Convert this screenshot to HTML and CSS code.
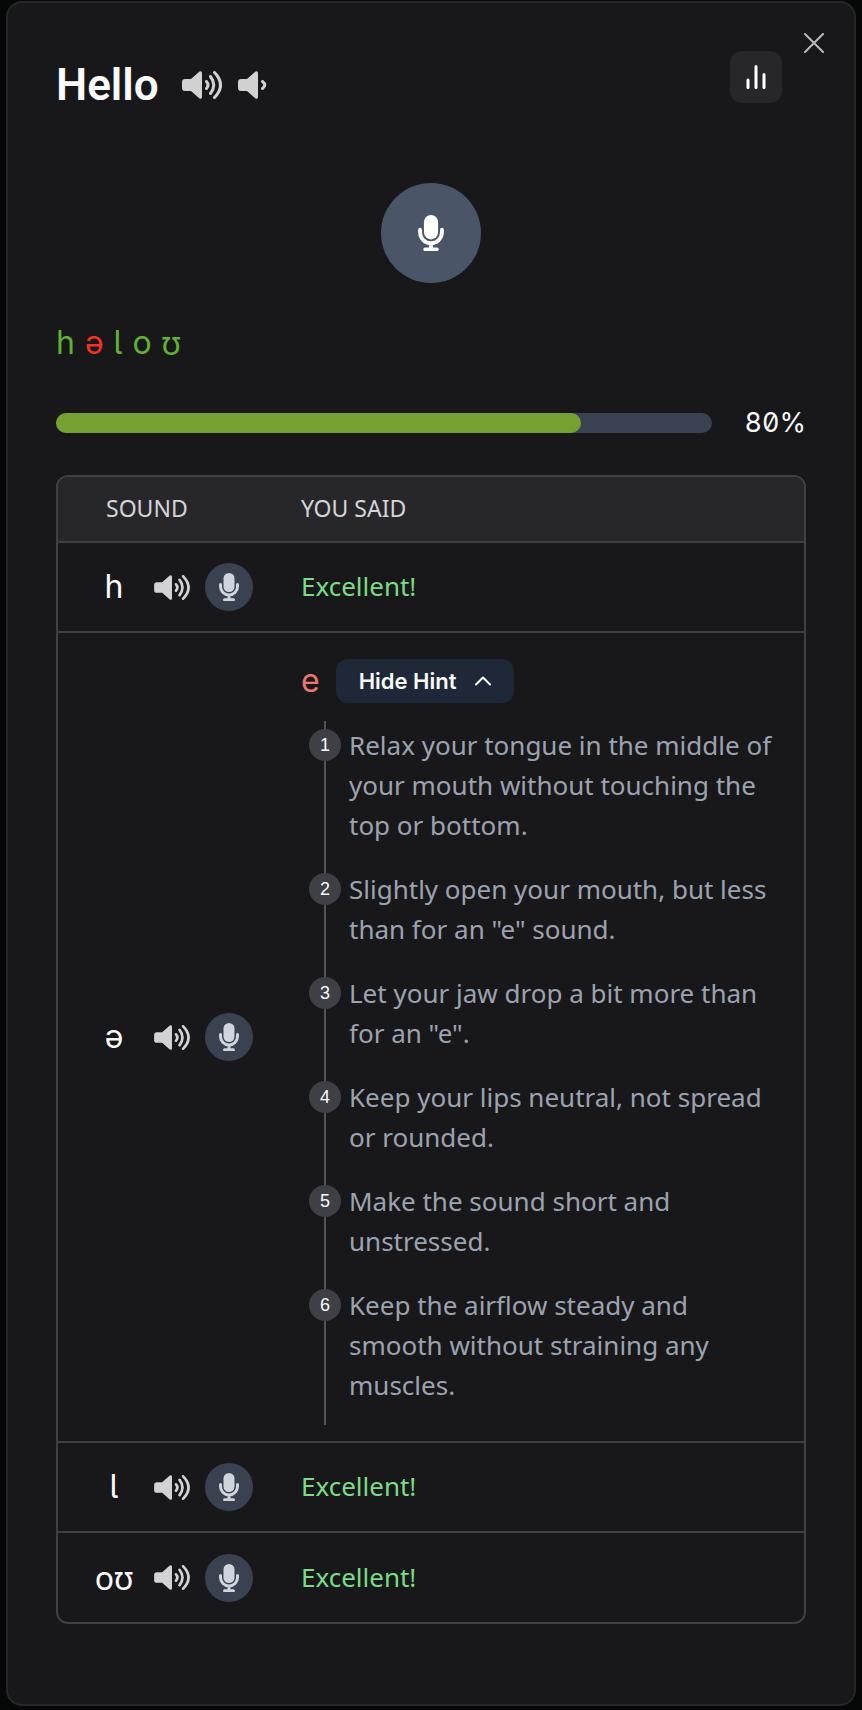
FILE: index.html
```html
<!DOCTYPE html>
<html lang="en">
<head>
<meta charset="utf-8">
<meta name="viewport" content="width=device-width, initial-scale=1">
<title>Hello – pronunciation</title>
<link rel="stylesheet" href="styles.css">
</head>
<body>
<svg class="sprite" aria-hidden="true">
  <symbol id="speaker-loud" viewBox="0 0 40 28">
    <path fill="currentColor" d="M3 8h6L17.500.600Q20 -.5 20 2V26Q20 28.500 17.500 27.400L9 20H3Q0 20 0 17V11Q0 8 3 8Z"/>
    <path class="wave" d="M24.500 10.500Q27.500 14 24.500 17.500M28.500 5.500Q35 14 28.500 22.500M32.500 1.500Q44.500 14 32.500 26.500"/>
  </symbol>
  <symbol id="speaker-quiet" viewBox="0 0 40 28">
    <path fill="currentColor" d="M3 8h6L17.500.600Q20 -.5 20 2V26Q20 28.500 17.500 27.400L9 20H3Q0 20 0 17V11Q0 8 3 8Z"/>
    <path class="wave" d="M24.500 10.500Q29 14 24.500 17.500"/>
  </symbol>
  <symbol id="mic" viewBox="0 0 20 28">
    <rect fill="currentColor" x="4.500" y="0" width="11" height="19" rx="5.500"/>
    <path class="wave" d="M1.500 11.500V13.500a8.500 8.500 0 0 0 17 0V11.500M10 22.500v3.500M5.500 26.700h9"/>
  </symbol>
</svg>
<main class="dialog">
  <button class="close" type="button" aria-label="Close"><svg viewBox="0 0 20 20"><path d="M1 1l18 18M19 1L1 19"/></svg></button>
  <header class="header">
    <h1 class="word">Hello</h1>
    <button class="speaker" type="button" aria-label="Play word"><svg><use href="#speaker-loud"/></svg></button>
    <button class="speaker" type="button" aria-label="Play word slowly"><svg><use href="#speaker-quiet"/></svg></button>
    <button class="stats" type="button" aria-label="Statistics"><svg viewBox="0 0 20 24"><path d="M2 15v7.500M10 1.500v21M18 9.500v13"/></svg></button>
  </header>
  <button class="record" type="button" aria-label="Record word"><svg><use href="#mic"/></svg></button>
  <p class="phonemes"><span>h</span><span class="wrong">ə</span><span>l</span><span>o</span><span class="ipa">ʊ</span></p>
  <div class="score">
    <div class="track" role="progressbar" aria-label="Score" aria-valuenow="80" aria-valuemin="0" aria-valuemax="100"><div class="fill" style="width: 80%"></div></div>
    <span class="percent">80%</span>
  </div>
  <div class="results">
    <table>
      <thead><tr><th class="sound-col" scope="col">SOUND</th><th scope="col">YOU SAID</th></tr></thead>
      <tbody>
        <tr>
          <td><div class="sound"><span class="symbol">h</span><button class="play" type="button" aria-label="Play h"><svg><use href="#speaker-loud"/></svg></button><button class="mic" type="button" aria-label="Record h"><svg><use href="#mic"/></svg></button></div></td>
          <td class="good">Excellent!</td>
        </tr>
        <tr>
          <td><div class="sound"><span class="symbol">ə</span><button class="play" type="button" aria-label="Play ə"><svg><use href="#speaker-loud"/></svg></button><button class="mic" type="button" aria-label="Record ə"><svg><use href="#mic"/></svg></button></div></td>
          <td class="details">
            <div class="said"><span class="heard">e</span><button class="hint" type="button" aria-expanded="true">Hide Hint<svg viewBox="0 0 16 10"><path d="M1 8.500L8 1.500l7 7"/></svg></button></div>
            <ol class="steps">
              <li>Relax your tongue in the middle of your mouth without touching the top or bottom.</li>
              <li>Slightly open your mouth, but less than for an "e" sound.</li>
              <li>Let your jaw drop a bit more than for an "e".</li>
              <li>Keep your lips neutral, not spread or rounded.</li>
              <li>Make the sound short and unstressed.</li>
              <li>Keep the airflow steady and smooth without straining any muscles.</li>
            </ol>
          </td>
        </tr>
        <tr>
          <td><div class="sound"><span class="symbol">l</span><button class="play" type="button" aria-label="Play l"><svg><use href="#speaker-loud"/></svg></button><button class="mic" type="button" aria-label="Record l"><svg><use href="#mic"/></svg></button></div></td>
          <td class="good">Excellent!</td>
        </tr>
        <tr>
          <td><div class="sound"><span class="symbol ipa">oʊ</span><button class="play" type="button" aria-label="Play oʊ"><svg><use href="#speaker-loud"/></svg></button><button class="mic" type="button" aria-label="Record oʊ"><svg><use href="#mic"/></svg></button></div></td>
          <td class="good">Excellent!</td>
        </tr>
      </tbody>
    </table>
  </div>
</main>
</body>
</html>
```
FILE: styles.css
```css
* { box-sizing: border-box; }
body {
  margin: 0;
  padding: 1px 6px 4px;
  min-height: 100vh;
  display: flex;
  background: #060707;
  color: #fafafa;
  font-family: "Noto Sans", "Open Sans", sans-serif;
  font-size: 26px;
  line-height: 40px;
}
button {
  display: flex;
  align-items: center;
  justify-content: center;
  margin: 0;
  padding: 0;
  border: 0;
  background: none;
  color: inherit;
  font: inherit;
  cursor: pointer;
}
svg { display: block; fill: none; stroke-linecap: round; stroke-linejoin: round; }
.sprite { position: absolute; width: 0; height: 0; }
.wave { stroke: currentColor; stroke-width: 3px; }

.dialog {
  position: relative;
  flex: 1;
  padding: 48px;
  border: 2px solid #27272a;
  border-radius: 16px;
  background: #18181b;
}
.close { position: absolute; top: 30px; right: 30px; }
.close svg { width: 20px; height: 20px; stroke: #bababb; stroke-width: 2px; }

.header { display: flex; align-items: center; height: 68px; padding-right: 24px; }
.word {
  margin: 0 23px 0 0;
  font-family: Roboto, sans-serif;
  font-size: 44px;
  font-weight: 600;
  line-height: 48px;
}
.speaker { margin-right: 16px; color: #d1d1d1; }
.speaker svg { width: 40px; height: 28px; }
.stats {
  align-self: flex-start;
  width: 52px;
  height: 52px;
  margin-left: auto;
  border-radius: 12px;
  background: #27272a;
}
.stats svg { width: 20px; height: 24px; stroke: #fff; stroke-width: 3px; }
.record {
  width: 100px;
  height: 100px;
  margin: 64px auto 0;
  border-radius: 50%;
  background: #4a5568;
  color: #fff;
}
.record svg { width: 26px; height: 36px; }

.phonemes, .symbol, .heard {
  font-family: Inter, "Noto Sans", sans-serif;
  font-feature-settings: "cv05";
  font-size: 32px;
}
.phonemes { display: flex; gap: 10px; margin: 40px 0 0; color: #62b132; }
.wrong { color: #ee3524; }
.ipa { font-family: "Noto Sans", sans-serif; }

.score { display: flex; align-items: center; gap: 32px; margin-top: 40px; }
.track { flex: 1; height: 20px; border-radius: 10px; background: #3a4150; }
.fill { height: 100%; border-radius: 10px; background: #74a131; }
.percent { font-family: Inter, sans-serif; font-size: 27px; font-feature-settings: "zero", "tnum"; }

.results { margin-top: 32px; border: 2px solid #3f3f46; border-radius: 12px; overflow: hidden; }
table { width: 100%; border-collapse: collapse; table-layout: fixed; }
th {
  height: 65px;
  padding: 0 24px 2px;
  background: #27272a;
  color: #d4d4d8;
  font-size: 23px;
  font-weight: 400;
  text-align: left;
}
.sound-col { width: 219px; padding-left: 48px; }
td { height: 90px; padding: 0 24px 2px; border-top: 2px solid #3f3f46; }
td:first-child { padding: 0 23px 0 32px; }
.sound { display: flex; align-items: center; }
.symbol { width: 48px; text-align: center; }
.play { margin: 0 15px 0 16px; color: #d1d1d6; }
.play svg { width: 36px; height: 25px; }
.mic { width: 48px; height: 48px; border-radius: 50%; background: #3a4150; color: #d1d5db; }
.mic svg { width: 20px; height: 28px; }
.good { color: #7bdb87; }

.details { padding-top: 26px; padding-bottom: 16px; }
.said { display: flex; align-items: center; gap: 16px; }
.heard { color: #e9776f; }
.hint {
  gap: 18px;
  height: 44px;
  padding: 0 23px;
  border-radius: 12px;
  background: #1f2838;
  font-family: Inter, sans-serif;
  font-size: 22px;
  font-weight: 600;
}
.hint svg { width: 16px; height: 10px; stroke: #fff; stroke-width: 2px; }
.steps { margin: 18px 0 0; padding: 0; list-style: none; color: #9ca3af; counter-reset: step; }
.steps li {
  position: relative;
  padding: 4px 0 20px 48px;
  counter-increment: step;
  background: linear-gradient(#52525b, #52525b) 23px 0 / 2px 100% no-repeat;
}
.steps li::before {
  content: counter(step);
  position: absolute;
  top: 8px;
  left: 8px;
  width: 32px;
  height: 32px;
  border-radius: 50%;
  background: #3f3f46;
  color: #fafafa;
  font-family: "Liberation Sans", sans-serif;
  font-size: 18px;
  line-height: 32px;
  text-align: center;
}
```
